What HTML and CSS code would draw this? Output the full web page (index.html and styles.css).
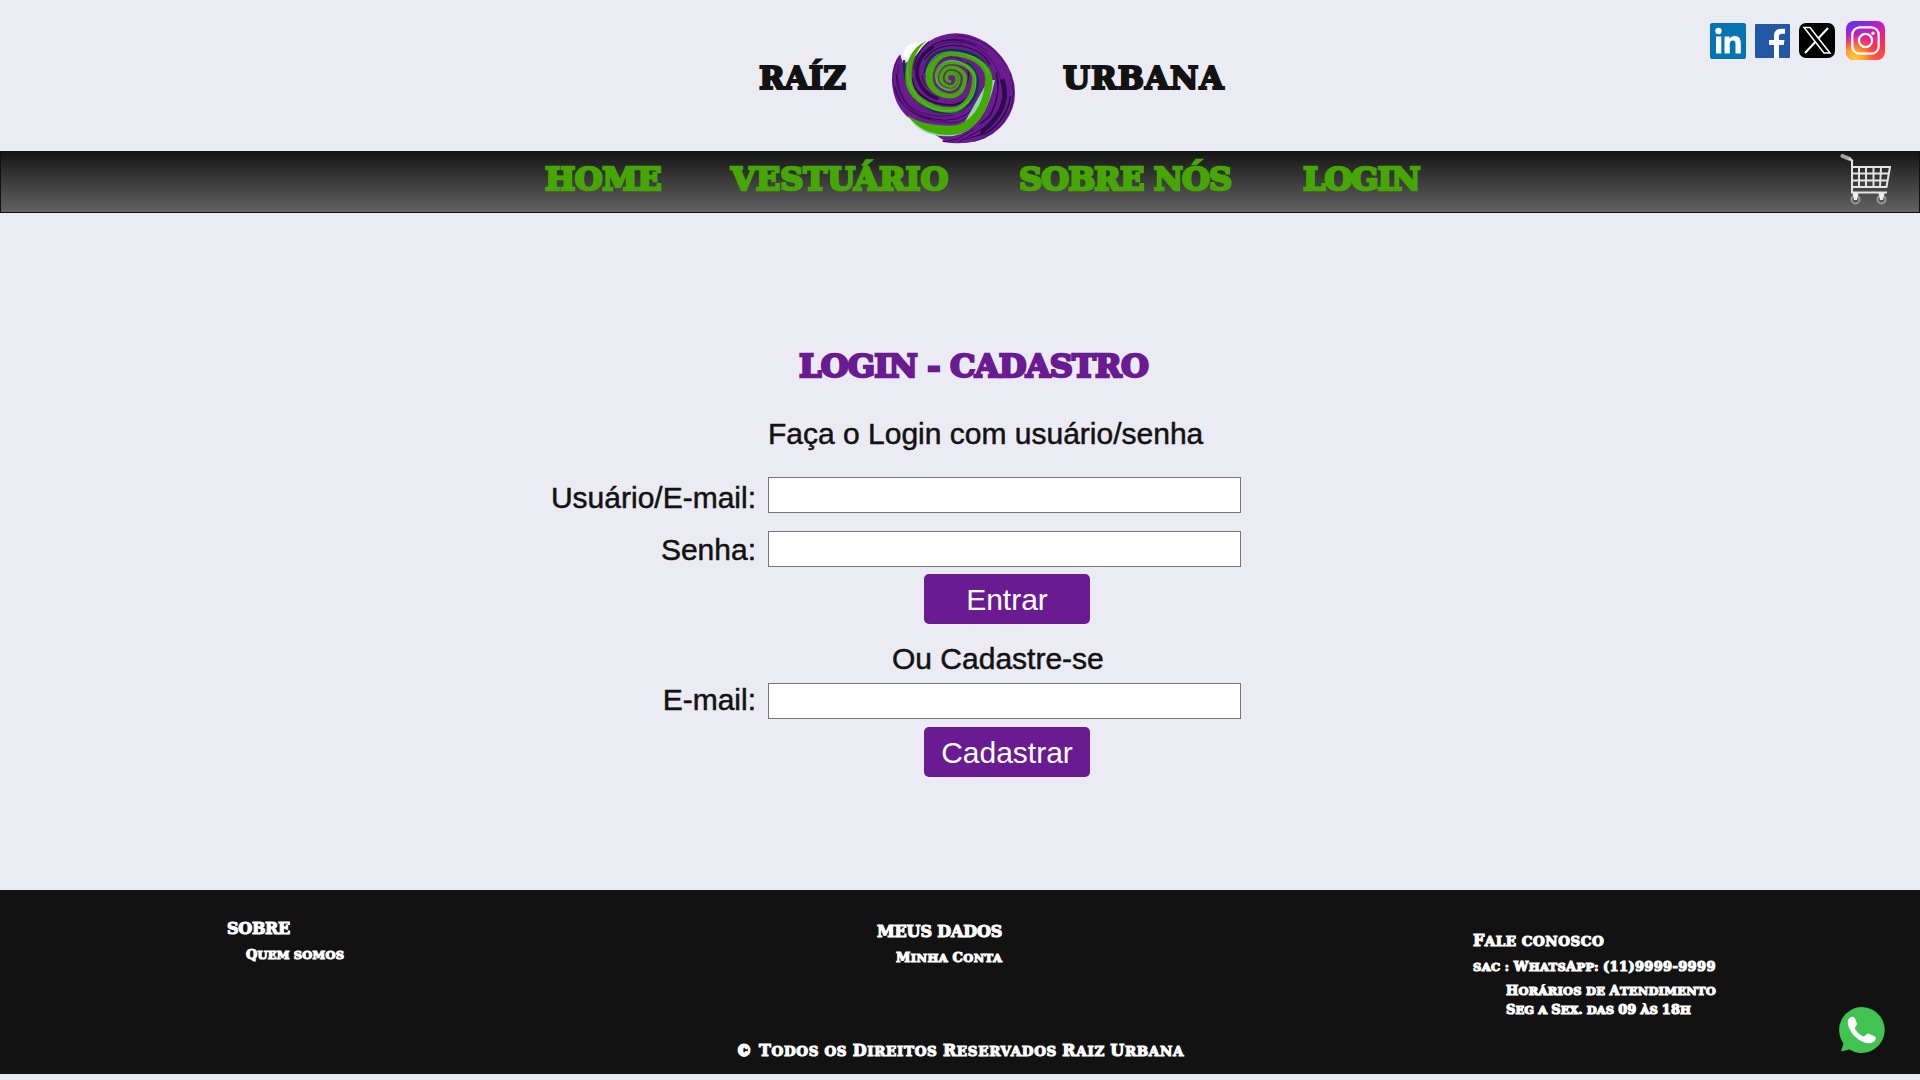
FILE: index.html
```html
<!DOCTYPE html>
<html lang="pt-BR">
<head>
<meta charset="utf-8">
<title>Raíz Urbana - Login</title>
<link rel="stylesheet" href="styles.css">
</head>
<body>
<header class="header">
  <span class="brand brand-left">RAÍZ</span>
  <svg class="logo" viewBox="0 0 450 378" aria-hidden="true">
    <path fill="#fff" d="M68 88Q82 50 112 54L138 48L90 112Z"/>
    <path fill="#6b1b91" d="M60 88Q36 115 36 165Q38 235 82 275L120 300L190 345L186 350Q240 360 290 348Q345 332 375 292Q405 252 405 205Q405 145 365 95Q330 55 300 43Q265 24 225 25Q180 27 145 50L100 100L70 118Z"/>
    <g fill="none" stroke="#2b0d49">
      <path stroke-width="2" d="M62 92Q38 120 38 165A175 128 0 0 0 213 293A105 133 0 0 0 318 160"/>
      <path stroke-width="3" d="M48 145Q55 278 195 286Q270 286 303 215M45 185Q65 268 155 283"/>
      <path stroke-width="2" d="M55 120Q42 195 91 246Q145 282 220 271"/>
      <path stroke-width="6" d="M97 160A116 80 0 0 0 213 240A72 80 0 0 0 285 160"/>
      <path stroke-width="11" d="M160 65Q104 98 112 155Q126 207 175 221"/>
      <path stroke-width="4" d="M147 50Q105 83 102 135M157 61Q215 29 287 63M133 105Q162 60 227 61Q305 68 331 120"/>
      <path stroke-width="2" d="M185 47Q260 30 322 78M230 30Q333 43 377 121M285 62Q355 108 363 170M142 80Q194 40 250 55M390 145Q410 202 390 256Q350 338 279 350"/>
      <path stroke-width="14" d="M366 163Q386 213 357 265Q329 305 300 323"/>
      <path stroke-width="5" d="M349 143Q365 213 328 275L263 328M391 214Q384 280 320 324L220 350"/>
      <path stroke-width="3" d="M126 150A87 62 0 0 0 213 212A53 62 0 0 0 266 150A53 55 0 0 0 213 95A55 60 0 0 0 158 155"/>
    </g>
    <g fill="none" stroke="#063c40" stroke-width="7">
      <path d="M72 105Q67 220 164 259Q254 277 286 211Q309 149 260 112"/>
      <path d="M133 145Q143 75 213 75Q315 77 337 160"/>
    </g>
    <path fill="#91d6ad" d="M84 273Q125 342 220 333Q315 315 345 165L325 165L248 302L130 308Z"/>
    <g fill="#43a903" stroke="#43a903">
      <path d="M84 273Q130 333 213 329A124 169 0 0 0 337 160A124 78 0 0 0 213 82A76 78 0 0 0 137 160A76 60 0 0 0 213 220A48 60 0 0 0 261 160A48 38 0 0 0 213 122A35 38 0 0 0 178 160A35 28 0 0 0 213 188A21 28 0 0 0 234 160A21 17 0 0 0 213 143A15 17 0 0 0 198 160A15 10 0 0 0 213 170L213 166A9 6 0 0 1 204 160A9 10 0 0 1 213 150A14 10 0 0 1 227 160A14 21 0 0 1 213 181A25 21 0 0 1 188 160A25 28 0 0 1 213 132A36 28 0 0 1 249 160A36 46 0 0 1 213 206A55 46 0 0 1 158 160A55 67 0 0 1 213 93A103 67 0 0 1 316 160A103 142 0 0 1 213 302Q130 304 84 273Z"/>
      <path d="M138 48Q77 78 76 160A137 103 0 0 0 213 263A76 103 0 0 0 289 160A76 54 0 0 0 213 106A47 54 0 0 0 166 160A47 37 0 0 0 213 197A29 37 0 0 0 242 160A29 23 0 0 0 213 137A19 23 0 0 0 194 160A19 14 0 0 0 213 174L213 170A14 10 0 0 1 199 160A14 17 0 0 1 213 143A23 17 0 0 1 236 160A23 31 0 0 1 213 191A39 31 0 0 1 174 160A39 43 0 0 1 213 117A64 43 0 0 1 277 160A64 87 0 0 1 213 247A118 87 0 0 1 95 160Q90 92 138 48Z"/>
    </g>
    <path fill="none" stroke="#73b6a4" stroke-width="2" d="M82 110Q74 210 161 252Q224 272 267 228M137 150Q147 82 213 80Q302 84 326 148M165 158Q166 111 213 106Q268 109 287 160Q292 203 261 236M213 197Q172 193 168 160"/>
    <path fill="#6b1b91" d="M190 346Q240 337 283 304L309 294L300 327L231 352Z"/>
    <path fill="none" stroke="#2b0d49" stroke-width="3" d="M191 350L233 342L282 313M238 350L308 311"/>
  </svg>
  <span class="brand brand-right">URBANA</span>
  <div class="social">
    <svg class="linkedin" viewBox="0 0 36 36"><rect width="36" height="36" rx="2" fill="#0474b3"/><circle cx="8.5" cy="8" r="3.2" fill="#fff"/><path fill="#fff" d="M6 13.5h5.300V30.500H6zM14.500 13.500h5v2.400c1-1.800 2.900-2.800 5.300-2.800 4.700 0 6 3 6 7.400v10h-5.300v-9c0-2.200-.4-4-2.700-4s-3 1.700-3 4v9h-5.300z"/></svg>
    <svg class="facebook" viewBox="0 0 35 34"><rect width="35" height="34" rx="1" fill="#2456a6"/><path fill="#fff" d="M19 34V21h-5v-5h5v-4c0-5 3-7.300 7-7.300h4v5h-3c-2.300 0-3 1-3 3V16h5.500l-.8 5H24v13z"/></svg>
    <svg class="x" viewBox="0 0 36 35"><rect width="36" height="35" rx="7" fill="#000"/><path fill="none" stroke="#fff" stroke-width="1.500" d="M5 4.500h6L31 30h-6z"/><path stroke="#fff" stroke-width="2" d="M29 5L19.200 15.500M16.500 18.700L6 30"/></svg>
    <svg class="instagram" viewBox="0 0 39 39"><defs><linearGradient id="ig" x1=".2" y1="0" x2=".6" y2="1"><stop stop-color="#5a32f6"/><stop offset=".4" stop-color="#d81cae"/><stop offset=".75" stop-color="#ff2d50"/><stop offset="1" stop-color="#ff4b45"/></linearGradient><radialGradient id="sun" cx=".2" cy="1" r=".65"><stop stop-color="#ffd43a"/><stop offset=".45" stop-color="#ff9a28"/><stop offset="1" stop-color="#ff5a30" stop-opacity="0"/></radialGradient></defs><rect width="39" height="39" rx="8" fill="url(#ig)"/><rect width="39" height="39" rx="8" fill="url(#sun)"/><g fill="none" stroke="#fff" stroke-width="2.300"><rect x="6.300" y="6.300" width="26.400" height="26.400" rx="7.500"/><circle cx="19.500" cy="19.500" r="6.600"/></g><circle cx="27" cy="12.300" r="1.700" fill="#fff"/></svg>
  </div>
</header>
<nav class="nav">
  <a class="nav-home">HOME</a>
  <a class="nav-store">VESTUÁRIO</a>
  <a class="nav-about">SOBRE NÓS</a>
  <a class="nav-login">LOGIN</a>
  <svg class="cart" viewBox="0 0 52 51"><g fill="none" stroke="#e5e5e7"><path stroke-width="2" d="M12 5.500V38.500H47"/><path stroke-width="2" d="M12 13H50L46.500 33H12M12 19.500H49M12 26.500H48M19 13V33M26 13V33M33.500 13V33M41 13L40 33"/></g><path stroke="#a6a6a9" stroke-width="4" stroke-linecap="round" d="M2.500 2L9.500 4.800"/><path stroke="#ddd" stroke-width="2" d="M9 4.500l4 3"/><g fill="#555" stroke="#97979b" stroke-width="2"><circle cx="15.500" cy="45.500" r="4"/><circle cx="41.500" cy="45.500" r="4"/></g><path fill="#eee" d="M12.500 39h6l-1.500 7h-3zM38.500 39h6L43 46h-3z"/></svg>
</nav>
<main class="main">
  <h1 class="title">LOGIN - CADASTRO</h1>
  <form class="form">
    <p class="intro">Faça o Login com usuário/senha</p>
    <label class="label" for="user">Usuário/E-mail:</label>
    <input class="field" id="user" type="text">
    <label class="label label-pass" for="pass">Senha:</label>
    <input class="field" id="pass" type="password">
    <button class="button" type="button">Entrar</button>
    <p class="or">Ou Cadastre-se</p>
    <label class="label label-mail" for="mail">E-mail:</label>
    <input class="field" id="mail" type="email">
    <button class="button" type="button">Cadastrar</button>
  </form>
</main>
<footer class="footer">
  <div class="columns">
    <section class="col-about">
      <h2 class="heading about-title"><b>SOBRE</b></h2>
      <p class="item about-link"><b>Q</b>uem somos</p>
    </section>
    <section class="col-data">
      <h2 class="heading data-title"><b>MEUS DADOS</b></h2>
      <p class="item data-link"><b>M</b>inha <b>C</b>onta</p>
    </section>
    <section class="col-contact">
      <h2 class="heading contact-title"><b>F</b>ale conosco</h2>
      <p class="item phone">sac : <b>W</b>hats<b>A</b>pp: <b>(11)9999-9999</b></p>
      <p class="item hours"><b>H</b>orários de <b>A</b>tendimento</p>
      <p class="item days"><b>S</b>eg a <b>S</b>ex. das <b>09</b> às <b>18</b>h</p>
    </section>
  </div>
  <p class="copyright"><b>© T</b>odos os <b>D</b>ireitos <b>R</b>eservados <b>R</b>aiz <b>U</b>rbana</p>
  <svg class="whatsapp" viewBox="0 0 46 46"><path fill="#41c351" d="M23 0a23 23 0 1 1-12.500 42.500L2 44.500l2.500-8A23 23 0 0 1 23 0z"/><path fill="#fff" d="M10 11.500c2-2.500 5-2 6 0l2 5c.6 1.500-2.500 3.500-2 5 2 4 5 6.500 8.500 8 1.500.5 3-3.500 5-3l6.500 3c1.500.8 1 3.500-1 5-4 3-10 2-15.500-2C13 28 7.500 19 9 13z"/></svg>
</footer>
</body>
</html>
```
FILE: styles.css
```css
* { box-sizing: border-box; }
body { margin: 0; height: 1080px; background: #ebebf4; color: #121212; font-family: "Liberation Sans", Arial, sans-serif; overflow: hidden; }
h1, h2, p { margin: 0; }
svg { display: block; flex: none; }

.header { display: flex; align-items: flex-start; height: 151px; padding: 0 35px 0 759px; }
.brand, .nav, .title, .footer { font-family: "DejaVu Serif", serif; font-weight: 700; white-space: nowrap; }
.brand { margin-top: 58px; font-size: 31px; line-height: 40px; -webkit-text-stroke: 2.2px #121212; }
.brand-left { width: 121px; }
.brand-right { margin-left: 33px; letter-spacing: 1px; }
.logo { width: 150px; height: 126px; margin-top: 25px; }
.social { display: flex; align-items: center; margin: 21px 0 0 auto; }
.linkedin { width: 36px; height: 36px; }
.facebook { width: 35px; height: 34px; margin-left: 9px; }
.x { width: 36px; height: 35px; margin-left: 9px; }
.instagram { width: 39px; height: 39px; margin-left: 11px; }

.nav { display: flex; align-items: flex-start; height: 62px; padding: 7px 27px 0 544px; border: 1px solid #111; background: linear-gradient(#161616, #626262); color: #46a605; font-size: 32px; line-height: 40px; -webkit-text-stroke: 2.6px #46a605; }
.nav-home { width: 186px; letter-spacing: -.4px; }
.nav-store { width: 288px; }
.nav-about { width: 284px; letter-spacing: -.9px; }
.nav-login { letter-spacing: -1.1px; }
.cart { width: 52px; height: 51px; margin: -5px 0 0 auto; }

.main { height: 677px; padding-top: 133px; }
.title { width: 349px; margin-left: 799px; color: #6b1b91; font-size: 32px; line-height: 40px; letter-spacing: -.8px; -webkit-text-stroke: 2.5px #6b1b91; }
.form { display: grid; grid-template-columns: 204px 473px; grid-template-rows: 61px 54px 43px 66px 43px 44px 50px; column-gap: 12px; justify-content: start; padding: 30px 0 0 552px; font-size: 30px; line-height: 36px; }
.intro, .label, .or { -webkit-text-stroke: .5px #121212; white-space: nowrap; }
.intro { grid-column: 2; }
.label { justify-self: end; margin-top: 3px; }
.label-pass { margin-top: 1px; }
.label-mail { margin-top: -1px; }
.field { width: 473px; height: 36px; padding: 1px 2px; border: 1px solid #767676; background: #fff; }
.button { grid-column: 2; margin-left: 156px; width: 166px; height: 50px; padding: 2px 0 0; border: 0; border-radius: 5px; background: #6b1b91; color: #fff; font: 30px "Liberation Sans", Arial, sans-serif; }
.or { grid-column: 2; margin: 1px 0 0 124px; }

.footer { position: relative; height: 184px; padding-top: 29px; background: #121212; color: #fff; -webkit-text-stroke: 1.1px #fff; text-transform: uppercase; }
.columns { display: grid; grid-template-columns: 650px 596px 1fr; height: 122px; padding-left: 227px; }
.heading, .copyright { font-size: 13.5px; line-height: 20px; }
.heading b, .copyright b { font-size: 16px; line-height: 1; }
.item { margin: 6px 0 0 19px; font-size: 11.5px; line-height: 20px; }
.item b { font-size: 13px; line-height: 1; }
.about-title { letter-spacing: -.3px; }
.about-link { letter-spacing: .2px; }
.data-title { letter-spacing: -.15px; }
.data-link { letter-spacing: .4px; }
.contact-title { letter-spacing: .5px; }
.col-data { padding-top: 3px; }
.col-contact { padding-top: 12px; }
.phone { margin-left: 0; letter-spacing: .35px; }
.hours { margin: 4px 0 0 33px; letter-spacing: .23px; }
.days { margin: -1px 0 0 33px; letter-spacing: .06px; }
.copyright { padding-left: 736px; letter-spacing: .66px; }
.whatsapp { position: absolute; right: 35px; bottom: 21px; width: 46px; height: 46px; }
```
